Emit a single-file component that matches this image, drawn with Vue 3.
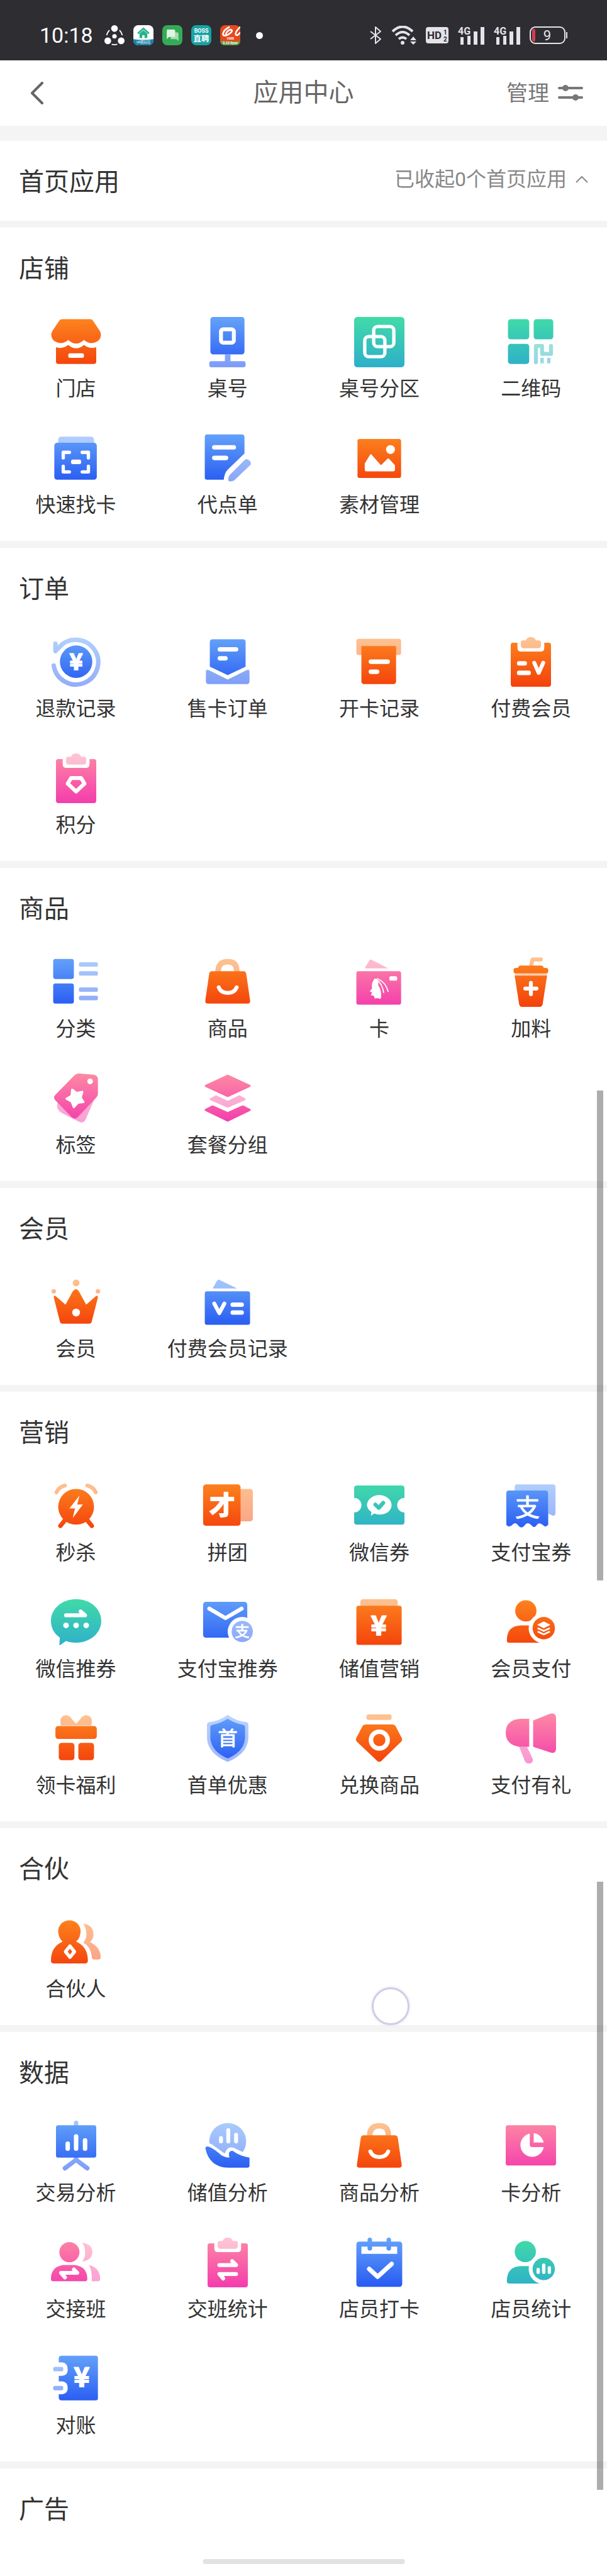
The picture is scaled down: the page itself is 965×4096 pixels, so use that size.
<template>
  <div class="page">
    <!-- shared gradients and app icons -->
    <svg class="sprite" width="0" height="0" aria-hidden="true">
      <defs>
        <linearGradient id="orange" gradientUnits="userSpaceOnUse" x1="0" y1="4" x2="0" y2="86">
          <stop offset="0" stop-color="#fd831f" /><stop offset="1" stop-color="#f4430c" />
        </linearGradient>
        <linearGradient id="blue" gradientUnits="userSpaceOnUse" x1="0" y1="4" x2="0" y2="86">
          <stop offset="0" stop-color="#62a0f9" /><stop offset="1" stop-color="#295cf3" />
        </linearGradient>
        <linearGradient id="green" gradientUnits="userSpaceOnUse" x1="0" y1="4" x2="0" y2="86">
          <stop offset="0" stop-color="#41d9a9" /><stop offset="1" stop-color="#2eb1c8" />
        </linearGradient>
        <linearGradient id="pink" gradientUnits="userSpaceOnUse" x1="0" y1="4" x2="0" y2="86">
          <stop offset="0" stop-color="#fd86a4" /><stop offset="1" stop-color="#f43fac" />
        </linearGradient>
      </defs>

      <symbol id="shop" viewBox="0 0 90 90">
        <g fill="url(#orange)">
          <path d="M20 4H70Q74 4 76 8L88 26Q92 36 84 43Q71 51 59 41Q45 54 31 41Q19 51 6 43Q-2 36 2 26L14 8Q16 4 20 4Z" />
          <path d="M9 54Q20 58 31 50Q45 62 59 50Q70 58 81 54V80Q81 84 77 84H13Q9 84 9 80Z" />
        </g>
        <rect x="31" y="65" width="28" height="8" rx="3" fill="#fff" />
      </symbol>
      <symbol id="table" viewBox="0 0 90 90">
        <g fill="url(#blue)">
          <rect x="14" y="0" width="61" height="67" rx="5" />
          <path opacity=".6" d="M40 67H50V79H73Q77 79 77 83V86Q77 90 73 90H16Q12 90 12 86V83Q12 79 16 79H40Z" />
        </g>
        <rect x="33" y="22" width="23" height="24" rx="4" fill="none" stroke="#fff" stroke-width="7" />
      </symbol>
      <symbol id="area" viewBox="0 0 90 90">
        <rect width="90" height="90" rx="6" fill="url(#green)" />
        <g fill="none" stroke="#fff" stroke-width="6">
          <rect x="35" y="17" width="36" height="36" rx="7" />
          <rect x="19" y="35" width="36" height="36" rx="7" />
        </g>
      </symbol>
      <symbol id="qrcode" viewBox="0 0 90 90">
        <g fill="url(#green)">
          <rect x="4" y="4" width="38" height="36" rx="5" />
          <rect x="50" y="4" width="35" height="36" rx="5" />
          <rect x="4" y="48" width="38" height="36" rx="5" />
        </g>
        <g opacity=".5">
          <path d="M54 81V52H65V66H81V52" fill="none" stroke="url(#green)" stroke-width="7" stroke-linecap="round" stroke-linejoin="round" />
          <path d="M62 73H68V83H62ZM74 73H80V83H74Z" fill="url(#green)" />
        </g>
      </symbol>
      <symbol id="scan" viewBox="0 0 90 90">
        <rect x="13" y="6" width="64" height="20" rx="5" fill="url(#blue)" opacity=".5" />
        <rect x="6" y="17" width="76" height="66" rx="5" fill="url(#blue)" />
        <path d="M22 44V34H33M56 34H67V44M67 59V69H56M33 69H22V59" fill="none" stroke="#fff" stroke-width="6" stroke-linecap="round" stroke-linejoin="round" />
        <rect x="36" y="47" width="18" height="8" rx="3" fill="#fff" />
      </symbol>
      <symbol id="order-edit" viewBox="0 0 90 90">
        <g fill="url(#blue)">
          <path d="M8 2H70Q75 2 75 7V36L45 65Q39 71 38 83H8Q4 83 4 79V7Q4 2 8 2Z" />
          <path opacity=".55" d="M75 48Q79 44 83 48L85 50Q88 54 85 57L58 83Q55 86 49 86Q46 86 46 83Q46 77 49 74Z" />
        </g>
        <path d="M21 25H56M21 44H42" stroke="#fff" stroke-width="8" stroke-linecap="round" />
      </symbol>
      <symbol id="image" viewBox="0 0 90 90">
        <rect x="6" y="10" width="78" height="70" rx="4" fill="url(#orange)" />
        <path d="M19 54L28 39Q30 36 32 39L48 57L59 46Q61 44 63 46L73 57V65Q73 68 70 68H22Q19 68 19 65Z" fill="#fff" />
        <circle cx="65" cy="29" r="8" fill="#fff" />
      </symbol>

      <symbol id="refund" viewBox="0 0 90 90">
        <path d="M5 51A40 40 0 1 0 14 19L8 25V12" fill="none" stroke="url(#blue)" stroke-width="8" stroke-linecap="round" stroke-linejoin="round" opacity=".5" />
        <circle cx="45" cy="44" r="29" fill="url(#blue)" />
      </symbol>
      <symbol id="card-order" viewBox="0 0 90 90">
        <g fill="url(#blue)">
          <path d="M18 4H72Q77 4 77 9V53L45 68L13 53V9Q13 4 18 4Z" />
          <path opacity=".6" d="M6 62Q6 57 11 59L45 76L79 59Q84 57 84 62V79Q84 84 79 84H11Q6 84 6 79Z" />
        </g>
        <path d="M31 22H60M31 38H41" stroke="#fff" stroke-width="8" stroke-linecap="round" />
      </symbol>
      <symbol id="card-log" viewBox="0 0 90 90">
        <rect x="4" y="3" width="80" height="29" rx="4" fill="url(#orange)" opacity=".5" />
        <path d="M13 16H75V79Q75 84 70 84H18Q13 84 13 79Z" fill="url(#orange)" />
        <path d="M30 44H60M30 62H41" stroke="#fff" stroke-width="8" stroke-linecap="round" />
      </symbol>
      <symbol id="board" viewBox="0 0 90 90">
        <path d="M13 10H21V19Q21 26 28 26H62Q69 26 69 19V10H77Q81 10 81 14V84Q81 89 76 89H14Q9 89 9 84V14Q9 10 13 10Z" />
        <path opacity=".5" d="M27 10Q27 6 31 6H36Q38 0 45 0Q52 0 54 6H59Q63 6 63 10V15Q63 20 58 20H32Q27 20 27 15Z" />
      </symbol>
      <symbol id="paid-member" viewBox="0 0 90 90">
        <use href="#board" width="90" height="90" fill="url(#orange)" />
        <path d="M24 47H34M24 64H41" stroke="#fff" stroke-width="8" stroke-linecap="round" />
        <path d="M51 46L59 64L67 46" fill="none" stroke="#fff" stroke-width="7" stroke-linecap="round" stroke-linejoin="round" />
      </symbol>
      <symbol id="points" viewBox="0 0 90 90">
        <use href="#board" width="90" height="90" fill="url(#pink)" />
        <path d="M36 44H54L60 54L45 68L30 54Z" fill="none" stroke="#fff" stroke-width="7" stroke-linejoin="round" />
      </symbol>

      <symbol id="category" viewBox="0 0 90 90">
        <g fill="url(#blue)">
          <rect x="4" y="3" width="37" height="36" rx="4" />
          <rect x="4" y="47" width="37" height="36" rx="4" />
          <g opacity=".52">
            <rect x="50" y="9" width="34" height="8" rx="3" />
            <rect x="50" y="25" width="34" height="8" rx="3" />
            <rect x="50" y="54" width="34" height="8" rx="3" />
            <rect x="50" y="69" width="34" height="8" rx="3" />
          </g>
        </g>
      </symbol>
      <symbol id="bag" viewBox="0 0 90 90">
        <path d="M28 27V22Q30 8 45 8Q60 8 61 22V27" fill="none" stroke="url(#orange)" stroke-width="10" opacity=".5" />
        <path d="M17 25H73Q77 25 78 29L85 77Q86 83 80 83H10Q4 83 5 77L12 29Q13 25 17 25Z" fill="url(#orange)" />
        <path d="M29 54Q33 64 45 64Q57 64 61 54" fill="none" stroke="#fff" stroke-width="7" stroke-linecap="round" />
      </symbol>
      <symbol id="card" viewBox="0 0 90 90">
        <path d="M19 20L27 6Q29 3 32 5L61 20Z" fill="url(#pink)" opacity=".55" />
        <rect x="4" y="25" width="80" height="60" rx="4" fill="url(#pink)" />
        <rect x="63" y="34" width="14" height="8" rx="3" fill="#fff" />
        <path d="M37 38Q45 40 43 50Q50 60 48 73Q46 76 43 73L37 74L35 69L30 68L32 63L28 61L32 56Q30 46 37 38Z" fill="#fff" />
        <path d="M39 39Q50 46 53 64M41 38Q57 45 61 62" fill="none" stroke="#fff" stroke-width="2" />
      </symbol>
      <symbol id="cup" viewBox="0 0 90 90">
        <path d="M45 16L48 4H63" fill="none" stroke="url(#orange)" stroke-width="7" stroke-linejoin="round" stroke-linecap="round" opacity=".5" />
        <g fill="url(#orange)">
          <path d="M27 15H63Q67 15 68 19H72Q76 19 76 23V25Q76 29 72 29H18Q14 29 14 25V23Q14 19 18 19H22Q23 15 27 15Z" />
          <rect x="16" y="29" width="58" height="4" opacity=".35" />
          <path d="M16 33H74L66 84Q65 89 60 89H30Q25 89 24 84Z" />
        </g>
        <path d="M45 46V66M35 56H55" stroke="#fff" stroke-width="7" stroke-linecap="round" />
      </symbol>
      <symbol id="tag" viewBox="0 0 90 90">
        <g fill="url(#pink)">
          <path opacity=".5" d="M12 52Q8 64 20 71L50 86Q58 90 62 82L77 48Z" />
          <path d="M50 0L76 2Q83 3 84 9V36Q84 40 81 43L48 78Q42 83 37 78L8 48Q3 43 8 38L42 3Q45 0 50 0Z" />
        </g>
        <circle cx="70" cy="14" r="5" fill="#fff" />
        <path d="M38 29L46 35L56 33L53 43L58 51L48 52L41 60L37 50L28 45L37 40Z" fill="#fff" stroke="#fff" stroke-width="4" stroke-linejoin="round" />
      </symbol>
      <symbol id="layers" viewBox="0 0 90 90">
        <g fill="url(#pink)" stroke="url(#pink)" stroke-width="4" stroke-linejoin="round">
          <path d="M45 4L84 22L45 40L6 22Z" />
          <path opacity=".5" d="M24 41L45 51L66 41L75 46L45 59L15 46Z" />
          <path d="M18 59L45 71L72 59L84 65L45 84L6 65Z" />
        </g>
      </symbol>

      <symbol id="crown" viewBox="0 0 90 90">
        <g fill="url(#orange)">
          <g opacity=".5">
            <circle cx="45" cy="10" r="6" /><circle cx="5" cy="25" r="4" /><circle cx="84" cy="25" r="4" />
          </g>
          <path d="M5 36Q5 31 9 34L26 49L39 25Q45 17 50 25L63 49L80 34Q84 31 84 36L73 79Q72 83 68 83H21Q17 83 16 79Z" />
        </g>
        <circle cx="45" cy="63" r="7" fill="#fff" />
      </symbol>
      <symbol id="member-log" viewBox="0 0 90 90">
        <path d="M18 20L26 6Q28 3 31 5L62 20Z" fill="url(#blue)" opacity=".6" />
        <rect x="4" y="25" width="81" height="60" rx="4" fill="url(#blue)" />
        <path d="M21 47L30 64L39 47" fill="none" stroke="#fff" stroke-width="7" stroke-linecap="round" stroke-linejoin="round" />
        <path d="M54 49H70M54 63H70" stroke="#fff" stroke-width="8" stroke-linecap="round" />
      </symbol>

      <symbol id="flash" viewBox="0 0 90 90">
        <path d="M10 20Q14 11 25 8M80 20Q76 11 65 8" fill="none" stroke="url(#orange)" stroke-width="7" stroke-linecap="round" opacity=".5" />
        <path d="M17 80L25 70M73 80L65 70" stroke="url(#orange)" stroke-width="8" stroke-linecap="round" />
        <circle cx="45" cy="46" r="32" fill="url(#orange)" />
        <path d="M51 26L33 49H43L39 66L57 42H47Z" fill="#fff" />
      </symbol>
      <symbol id="group" viewBox="0 0 90 90">
        <rect x="50" y="14" width="40" height="58" rx="5" fill="url(#orange)" opacity=".5" />
        <rect x="1" y="6" width="67" height="74" rx="5" fill="url(#orange)" />
      </symbol>
      <symbol id="wechat-coupon" viewBox="0 0 90 90">
        <path d="M5 8H85Q90 8 90 13V30A13 13 0 0 0 90 56V73Q90 78 85 78H5Q0 78 0 73V56A13 13 0 0 0 0 30V13Q0 8 5 8Z" fill="url(#green)" />
        <path d="M45 25C57 25 67 33 67 43S57 60 45 60Q40 60 36 58L30 62L31 55Q23 50 23 43C23 33 33 25 45 25Z" fill="#fff" />
        <path d="M38 42L44 48L52 39" fill="none" stroke="url(#green)" stroke-width="7" stroke-linecap="round" stroke-linejoin="round" />
      </symbol>
      <symbol id="alipay-coupon" viewBox="0 0 90 90">
        <path d="M20 6H84Q89 6 89 11V57Q89 62 84 62L76 58V22Q76 17 71 17H16V11Q16 6 20 6Z" fill="url(#blue)" opacity=".5" />
        <path d="M6 17H71Q76 17 76 22V78Q72 84 67 79Q60 73 56 78Q51 86 46 79Q39 72 34 79Q28 87 22 79Q17 72 11 79Q4 84 1 78V22Q1 17 6 17Z" fill="url(#blue)" />
      </symbol>
      <symbol id="wechat-push" viewBox="0 0 90 90">
        <path d="M45 3C70 3 90 20 90 42S70 81 45 81Q34 81 27 78L17 85Q15 86 15 84L16 72Q0 61 0 42C0 20 20 3 45 3Z" fill="url(#green)" />
        <path d="M27 32H61L53 25" fill="none" stroke="#fff" stroke-width="7" stroke-linecap="round" stroke-linejoin="round" />
        <g fill="#fff"><circle cx="27" cy="50" r="5" /><circle cx="45" cy="50" r="5" /><circle cx="63" cy="50" r="5" /></g>
      </symbol>
      <symbol id="alipay-push" viewBox="0 0 90 90">
        <rect x="1" y="8" width="79" height="64" rx="5" fill="url(#blue)" />
        <path d="M12 20L41 37L70 20" fill="none" stroke="#fff" stroke-width="7" stroke-linecap="round" stroke-linejoin="round" />
        <circle cx="71" cy="61" r="26" fill="#fff" />
        <circle cx="71" cy="61" r="19" fill="url(#blue)" opacity=".55" />
      </symbol>
      <symbol id="stored" viewBox="0 0 90 90">
        <rect x="11" y="3" width="67" height="20" rx="5" fill="url(#orange)" opacity=".5" />
        <rect x="4" y="15" width="81" height="70" rx="4" fill="url(#orange)" />
      </symbol>
      <symbol id="member-pay" viewBox="0 0 90 90">
        <g fill="url(#orange)">
          <circle cx="36" cy="24" r="19" />
          <path d="M2 77Q2 50 28 50H60V81H6Q2 81 2 77Z" />
        </g>
        <circle cx="68" cy="55" r="27" fill="#fff" />
        <circle cx="68" cy="55" r="20" fill="url(#orange)" />
        <path d="M68 43L80 49L68 55L56 49Z" fill="#fff" />
        <path d="M57 55L68 60L79 55M57 61L68 66L79 61" fill="none" stroke="#fff" stroke-width="3" stroke-linejoin="round" />
      </symbol>
      <symbol id="gift" viewBox="0 0 90 90">
        <g fill="url(#orange)">
          <path opacity=".5" d="M18 21Q14 6 24 3Q32 1 38 10L45 18L52 10Q58 1 66 3Q76 6 72 21Z" />
          <rect x="8" y="22" width="74" height="23" rx="5" />
          <rect x="14" y="52" width="28" height="31" rx="5" />
          <rect x="49" y="52" width="28" height="31" rx="5" />
        </g>
      </symbol>
      <symbol id="shield" viewBox="0 0 90 90">
        <g fill="url(#blue)">
          <path opacity=".45" d="M45 2Q60 13 78 15Q82 16 82 20V44Q80 72 45 86Q10 72 8 44V20Q8 16 12 15Q30 13 45 2Z" />
          <path d="M45 9Q60 18 73 20Q76 21 76 24V44Q74 68 45 80Q16 68 14 44V24Q14 21 17 20Q30 18 45 9Z" />
        </g>
      </symbol>
      <symbol id="exchange" viewBox="0 0 90 90">
        <g fill="url(#orange)">
          <rect x="22" y="1" width="45" height="10" rx="4" opacity=".5" />
          <path d="M20 19H69Q72 19 74 22L85 43Q87 47 84 50L49 84Q45 88 41 84L5 50Q2 47 4 43L15 22Q17 19 20 19Z" />
        </g>
        <circle cx="45" cy="47" r="15" fill="none" stroke="#fff" stroke-width="8" />
      </symbol>
      <symbol id="horn" viewBox="0 0 90 90">
        <g fill="url(#pink)">
          <path d="M42 9V59H24Q0 55 0 34Q0 11 26 9Z" />
          <path d="M49 12L79 0Q90 -3 90 8V62Q90 73 79 69L49 59Z" />
          <path opacity=".55" d="M24 59H38L48 80Q50 86 44 89Q37 90 34 84Z" />
        </g>
      </symbol>

      <symbol id="partner" viewBox="0 0 90 90">
        <g fill="url(#orange)">
          <path d="M33 5C45 5 53 14 53 24Q53 36 45 43Q66 52 66 77Q66 82 61 82H5Q0 82 0 77Q0 52 21 43Q13 36 13 24C13 14 21 5 33 5Z" />
          <path opacity=".5" d="M58 11Q76 14 76 30Q76 38 70 44Q89 54 89 71Q89 75 85 75H77Q73 75 73 70Q71 52 58 45Q65 36 63 25Q62 17 58 11Z" />
        </g>
        <path d="M34 51L42 61L34 71L26 61Z" fill="none" stroke="#fff" stroke-width="6" stroke-linejoin="round" />
      </symbol>

      <symbol id="trade" viewBox="0 0 90 90">
        <path d="M45 3V8M45 65V69L25 84M45 69L65 84" fill="none" stroke="url(#blue)" stroke-width="8" stroke-linecap="round" opacity=".6" />
        <rect x="9" y="7" width="72" height="58" rx="4" fill="url(#blue)" />
        <path d="M30 40V49M45 27V49M61 34V49" stroke="#fff" stroke-width="8" stroke-linecap="round" />
      </symbol>
      <symbol id="hand" viewBox="0 0 90 90">
        <circle cx="45" cy="36" r="33" fill="url(#blue)" opacity=".55" />
        <path d="M33 30V36M46 16V36M60 24V36" stroke="#fff" stroke-width="7" stroke-linecap="round" />
        <path d="M6 48Q6 43 13 46L34 61Q42 65 46 65Q45 51 54 53Q66 60 84 65V83H44Q8 78 6 48Z" fill="#fff" stroke="#fff" stroke-width="12" stroke-linejoin="round" />
        <path d="M5 48Q6 43 13 46Q22 50 34 61Q42 65 48 65Q45 51 54 53Q66 62 84 65V79Q84 83 80 83H46Q12 82 5 48Z" fill="url(#blue)" />
      </symbol>
      <symbol id="card-chart" viewBox="0 0 90 90">
        <rect x="0" y="7" width="90" height="72" rx="4" fill="url(#pink)" />
        <path d="M43 22A21 21 0 1 0 68 46H47Q43 46 43 42Z" fill="#fff" />
        <path d="M50 21Q64 23 68 38H50Z" fill="#fff" />
      </symbol>
      <symbol id="shift" viewBox="0 0 90 90">
        <g fill="url(#pink)">
          <circle cx="33" cy="26" r="18" />
          <path d="M22 49H43Q65 52 65 74Q65 78 61 78H4Q0 78 0 74Q0 52 22 49Z" />
          <path opacity=".5" d="M56 9Q74 12 74 26T56 43Q62 34 61 26Q61 16 56 9ZM68 49Q88 54 88 74Q88 78 84 78H73Q74 60 68 49Z" />
        </g>
        <path d="M41 57L47 63H18L25 71" fill="none" stroke="#fff" stroke-width="7" stroke-linecap="round" stroke-linejoin="round" />
      </symbol>
      <symbol id="shift-stat" viewBox="0 0 90 90">
        <use href="#board" width="90" height="90" fill="url(#pink)" />
        <path d="M30 49H60L53 42M60 65H30L37 73" fill="none" stroke="#fff" stroke-width="7" stroke-linecap="round" stroke-linejoin="round" />
      </symbol>
      <symbol id="calendar" viewBox="0 0 90 90">
        <rect x="4" y="7" width="82" height="81" rx="5" fill="url(#blue)" />
        <path d="M13 16H77V29H13Z" fill="#fff" />
        <path d="M28 4V19M62 4V19" stroke="url(#blue)" stroke-width="8" stroke-linecap="round" />
        <path d="M27 56L42 70L67 47" fill="none" stroke="#fff" stroke-width="8" stroke-linecap="round" stroke-linejoin="round" />
      </symbol>
      <symbol id="staff" viewBox="0 0 90 90">
        <g fill="url(#green)">
          <circle cx="35" cy="25" r="19" />
          <path d="M2 78Q2 51 28 51H60V82H6Q2 82 2 78Z" />
        </g>
        <circle cx="68" cy="56" r="27" fill="#fff" />
        <circle cx="68" cy="56" r="20" fill="url(#green)" />
        <path d="M58 57V62M68 49V62M78 54V62" stroke="#fff" stroke-width="6" stroke-linecap="round" />
      </symbol>
      <symbol id="ledger" viewBox="0 0 90 90">
        <path d="M19 3H80Q84 3 84 7V79Q84 83 80 83H19Q14 83 14 78V72H20Q30 71 30 61Q30 50 20 49H14V39H20Q30 38 30 28Q30 16 20 15H14V8Q14 3 19 3Z" fill="url(#blue)" />
        <g fill="url(#blue)" opacity=".55">
          <rect x="4" y="23" width="18" height="8" rx="3" />
          <rect x="4" y="57" width="18" height="8" rx="3" />
        </g>
      </symbol>
    </svg>

    <div class="status-bar">
      <span class="time">10:18</span>
      <div class="status-apps">
        <svg viewBox="0 0 36 36">
          <g fill="#fff"><circle cx="18" cy="6" r="6" /><circle cx="6" cy="28" r="6" /><circle cx="30" cy="28" r="6" /><circle cx="18" cy="20" r="4" /></g>
          <path d="M9 9Q5 13 4 18M27 9Q31 13 32 18M13 34Q18 36 23 34" fill="none" stroke="#fff" stroke-width="2" />
        </svg>
        <svg viewBox="0 0 36 36">
          <rect width="36" height="36" rx="9" fill="#fff" />
          <path d="M0 25Q18 28 36 25V27Q36 36 27 36H9Q0 36 0 27Z" fill="#1a82a8" />
          <path d="M8 15L18 6L28 15" fill="none" stroke="#27b28b" stroke-width="3" />
          <path d="M11 15L18 9L25 15V23H20V18H16V23H11Z" fill="#27b28b" />
          <text x="18" y="33" font-size="6" fill="#fff" text-anchor="middle">VR租好房</text>
        </svg>
        <svg viewBox="0 0 36 36">
          <rect width="36" height="36" rx="9" fill="#35ab57" />
          <path d="M15 13H27Q29 13 29 15V28L25 25H15Z" fill="#a5dcb0" />
          <path d="M9 8H21Q23 8 23 10V19Q23 21 21 21H12L8 25V10Q8 8 9 8Z" fill="#e0f4e3" />
        </svg>
        <svg viewBox="0 0 36 36">
          <rect width="36" height="36" rx="9" fill="#17a3a4" />
          <g fill="#fff" text-anchor="middle" font-weight="700">
            <text x="18" y="14" font-size="10">BOSS</text><text x="18" y="29" font-size="14">直聘</text>
          </g>
        </svg>
        <svg viewBox="0 0 36 36">
          <rect width="36" height="36" rx="9" fill="#e8481c" />
          <path d="M0 28Q18 30 36 28Q36 36 27 36H9Q0 36 0 28Z" fill="#6d9a4b" />
          <path d="M17 3Q6 8 5 16Q6 21 14 17Q25 10 19 8Q12 9 10 17M36 3Q26 13 28 17Q31 20 36 13" fill="none" stroke="#fff" stroke-width="3" />
          <g fill="#fff" text-anchor="middle" font-weight="700">
            <text x="18" y="26" font-size="6">1688</text><text x="18" y="34" font-size="6">3.23 0yun</text>
          </g>
        </svg>
      </div>
      <span class="more-dot"></span>
      <div class="status-system">
        <svg width="20" height="30" viewBox="0 0 20 30"><path d="M2 9L18 21L10 28V2L18 9L2 21" fill="none" stroke="#e4e3ea" stroke-width="2" stroke-linejoin="round" /></svg>
        <svg width="40" height="30" viewBox="0 0 40 30">
          <path d="M2 9Q18 -6 34 9M7 15Q18 5 29 15M12 21Q18 16 24 21" fill="none" stroke="#e4e3ea" stroke-width="4" />
          <circle cx="18" cy="27" r="3" fill="#e4e3ea" />
          <path d="M30 23L35 17L40 23ZM30 25H40L35 30Z" fill="#e4e3ea" />
        </svg>
        <svg width="36" height="26" viewBox="0 0 36 26">
          <rect width="36" height="26" rx="4" fill="#e4e3ea" />
          <g fill="#2e2d32" font-weight="700"><text x="2" y="19" font-size="17">HD</text><text x="28" y="12" font-size="10">1</text><text x="28" y="23" font-size="10">2</text></g>
        </svg>
        <svg v-for="n in 2" :key="n" width="42" height="30" viewBox="0 0 42 30">
          <path d="M4 18H9V30H4ZM15 16H20V30H15ZM25 9H31V30H25ZM36 2H42V30H36Z" fill="#e4e3ea" />
          <text x="0" y="14" font-size="16" font-weight="700" fill="#e4e3ea">4G</text>
        </svg>
        <svg width="60" height="30" viewBox="0 0 60 30">
          <rect x="1" y="2" width="55" height="26" rx="8" fill="none" stroke="#e4e3ea" stroke-width="2" />
          <rect x="4" y="5" width="5" height="20" rx="2" fill="#d83a52" />
          <path d="M59 10V20" stroke="#e4e3ea" stroke-width="2" />
          <text x="28" y="23" font-size="22" text-anchor="middle" fill="#e4e3ea">9</text>
        </svg>
      </div>
    </div>

    <header class="nav">
      <button class="back" type="button" aria-label="返回">
        <svg width="22" height="36" viewBox="0 0 22 36"><path d="M19 2L3 18L19 34" fill="none" stroke="#666" stroke-width="4" stroke-linecap="round" stroke-linejoin="round" /></svg>
      </button>
      <h1>应用中心</h1>
      <button class="manage" type="button">
        管理
        <svg width="40" height="26" viewBox="0 0 40 26">
          <path d="M2 5H38M2 20H38" stroke="#777" stroke-width="4" stroke-linecap="round" />
          <circle cx="12" cy="5" r="5" fill="#777" /><circle cx="28" cy="20" r="5" fill="#777" />
        </svg>
      </button>
    </header>

    <section class="home-apps">
      <h2>首页应用</h2>
      <button class="collapse" type="button">
        已收起0个首页应用
        <svg width="20" height="12" viewBox="0 0 20 12"><path d="M1 11L10 2L19 11" fill="none" stroke="#888" stroke-width="2" /></svg>
      </button>
    </section>

    <section v-for="section in sections" :key="section.title" class="app-section">
      <h2>{{ section.title }}</h2>
      <div class="app-grid">
        <button v-for="app in section.apps" :key="app.name" class="app-item" type="button">
          <svg class="app-icon" viewBox="0 0 90 90" aria-hidden="true">
            <use :href="'#' + app.icon" width="90" height="90" />
            <text
              v-if="app.mark"
              class="mark"
              :class="{ thin: app.mark.thin }"
              :x="app.mark.x"
              :y="app.mark.y"
              :font-size="app.mark.size"
            >{{ app.mark.text }}</text>
          </svg>
          <span>{{ app.name }}</span>
        </button>
      </div>
    </section>

    <div class="scroll-thumb upper"></div>
    <div class="scroll-thumb lower"></div>
    <div class="touch-ring"></div>
    <div class="home-indicator"></div>
  </div>
</template>

<script setup>
// mark: character printed on top of the icon, in the icon's 90x90 space
const sections = [
  {
    title: '店铺',
    apps: [
      { name: '门店', icon: 'shop' },
      { name: '桌号', icon: 'table' },
      { name: '桌号分区', icon: 'area' },
      { name: '二维码', icon: 'qrcode' },
      { name: '快速找卡', icon: 'scan' },
      { name: '代点单', icon: 'order-edit' },
      { name: '素材管理', icon: 'image' }
    ]
  },
  {
    title: '订单',
    apps: [
      { name: '退款记录', icon: 'refund', mark: { text: '¥', x: 45, y: 58, size: 40 } },
      { name: '售卡订单', icon: 'card-order' },
      { name: '开卡记录', icon: 'card-log' },
      { name: '付费会员', icon: 'paid-member' },
      { name: '积分', icon: 'points' }
    ]
  },
  {
    title: '商品',
    apps: [
      { name: '分类', icon: 'category' },
      { name: '商品', icon: 'bag' },
      { name: '卡', icon: 'card' },
      { name: '加料', icon: 'cup' },
      { name: '标签', icon: 'tag' },
      { name: '套餐分组', icon: 'layers' }
    ]
  },
  {
    title: '会员',
    apps: [
      { name: '会员', icon: 'crown' },
      { name: '付费会员记录', icon: 'member-log' }
    ]
  },
  {
    title: '营销',
    apps: [
      { name: '秒杀', icon: 'flash' },
      { name: '拼团', icon: 'group', mark: { text: '才', x: 35, y: 60, size: 46 } },
      { name: '微信券', icon: 'wechat-coupon' },
      { name: '支付宝券', icon: 'alipay-coupon', mark: { text: '支', x: 39, y: 63, size: 44, thin: true } },
      { name: '微信推券', icon: 'wechat-push' },
      { name: '支付宝推券', icon: 'alipay-push', mark: { text: '支', x: 71, y: 70, size: 26, thin: true } },
      { name: '储值营销', icon: 'stored', mark: { text: '¥', x: 44, y: 67, size: 48 } },
      { name: '会员支付', icon: 'member-pay' },
      { name: '领卡福利', icon: 'gift' },
      { name: '首单优惠', icon: 'shield', mark: { text: '首', x: 45, y: 56, size: 35, thin: true } },
      { name: '兑换商品', icon: 'exchange' },
      { name: '支付有礼', icon: 'horn' }
    ]
  },
  {
    title: '合伙',
    apps: [{ name: '合伙人', icon: 'partner' }]
  },
  {
    title: '数据',
    apps: [
      { name: '交易分析', icon: 'trade' },
      { name: '储值分析', icon: 'hand' },
      { name: '商品分析', icon: 'bag' },
      { name: '卡分析', icon: 'card-chart' },
      { name: '交接班', icon: 'shift' },
      { name: '交班统计', icon: 'shift-stat' },
      { name: '店员打卡', icon: 'calendar' },
      { name: '店员统计', icon: 'staff' },
      { name: '对账', icon: 'ledger', mark: { text: '¥', x: 55, y: 59, size: 48 } }
    ]
  },
  { title: '广告', apps: [] }
];
</script>

<style>
body {
  background: #f4f4f4;
}
</style>

<style scoped>
.page {
  position: relative;
  display: flex;
  flex-direction: column;
  min-height: 100vh;
  background: #f4f4f4;
  color: #333;
  font-family: Roboto, "Noto Sans CJK SC", sans-serif;
}

.sprite {
  position: absolute;
}

.sprite symbol {
  overflow: visible;
}

.mark {
  fill: #fff;
  stroke: #fff;
  stroke-width: 2px;
  stroke-linejoin: round;
  font-family: "Noto Sans CJK SC", sans-serif;
  font-weight: 700;
  text-anchor: middle;
}

.mark.thin {
  stroke-width: 1px;
  font-weight: 400;
}

button {
  border: 0;
  padding: 0;
  background: none;
  color: inherit;
  font: inherit;
}

h1,
h2 {
  margin: 0;
  font-size: 40px;
  font-weight: 400;
  line-height: 56px;
}

/* Status bar */
.status-bar {
  display: flex;
  align-items: center;
  height: 80px;
  padding: 16px 63px 0 63px;
  background: #2e2d32;
  color: #fff;
}

.time {
  font-size: 34px;
  line-height: 40px;
}

.status-apps {
  display: flex;
  gap: 14px;
  margin-left: 18px;
}

.status-apps svg {
  width: 32px;
  height: 32px;
}

.more-dot {
  width: 11px;
  height: 11px;
  margin-left: 25px;
  border-radius: 50%;
  background: #fff;
}

.status-system {
  display: flex;
  align-items: center;
  gap: 15px;
  margin-left: auto;
}

/* Title bar */
.nav {
  display: grid;
  grid-template-columns: 1fr auto 1fr;
  align-items: center;
  height: 104px;
  padding: 0 38px;
  background: #fff;
}

.nav h1 {
  color: #666;
}

.back {
  justify-self: start;
  display: flex;
  padding-left: 10px;
}

.manage {
  justify-self: end;
  display: flex;
  align-items: center;
  gap: 14px;
  color: #777;
  font-size: 34px;
  line-height: 48px;
}

.home-apps {
  display: flex;
  align-items: center;
  justify-content: space-between;
  height: 127px;
  margin-top: 24px;
  padding: 0 30px;
  background: #fff;
}

.home-apps h2 {
  padding-top: 4px;
}

.collapse {
  display: flex;
  align-items: center;
  gap: 14px;
  padding-bottom: 6px;
  color: #888;
  font-size: 32px;
  line-height: 44px;
}

/* App groups */
.app-section {
  margin-top: 11px;
  background: #fff;
}

.app-section:last-of-type {
  flex: 1;
}

.app-section h2 {
  padding: 38px 30px 34px;
}

.app-grid {
  display: grid;
  grid-template-columns: repeat(4, minmax(0, 1fr));
}

.app-item {
  display: flex;
  flex-direction: column;
  align-items: center;
  gap: 16px;
  padding: 14px 0 39px;
  font-size: 32px;
  line-height: 36px;
  white-space: nowrap;
}

.app-icon {
  width: 80px;
  height: 80px;
  overflow: visible;
}

/* Overlays */
.scroll-thumb {
  position: absolute;
  right: 6px;
  width: 10px;
  background: rgba(0, 0, 0, 0.32);
}

.scroll-thumb.upper {
  top: 1734px;
  height: 779px;
}

.scroll-thumb.lower {
  top: 2992px;
  height: 967px;
}

.touch-ring {
  position: absolute;
  top: 3160px;
  left: 591px;
  width: 60px;
  height: 60px;
  box-sizing: border-box;
  border: 3px solid #cfcee4;
  border-radius: 50%;
  box-shadow: 0 0 4px #dcdcf4;
}

.home-indicator {
  position: absolute;
  bottom: 19px;
  left: 50%;
  width: 321px;
  height: 8px;
  border-radius: 4px;
  background: #e2e2e2;
  transform: translateX(-50%);
}
</style>
